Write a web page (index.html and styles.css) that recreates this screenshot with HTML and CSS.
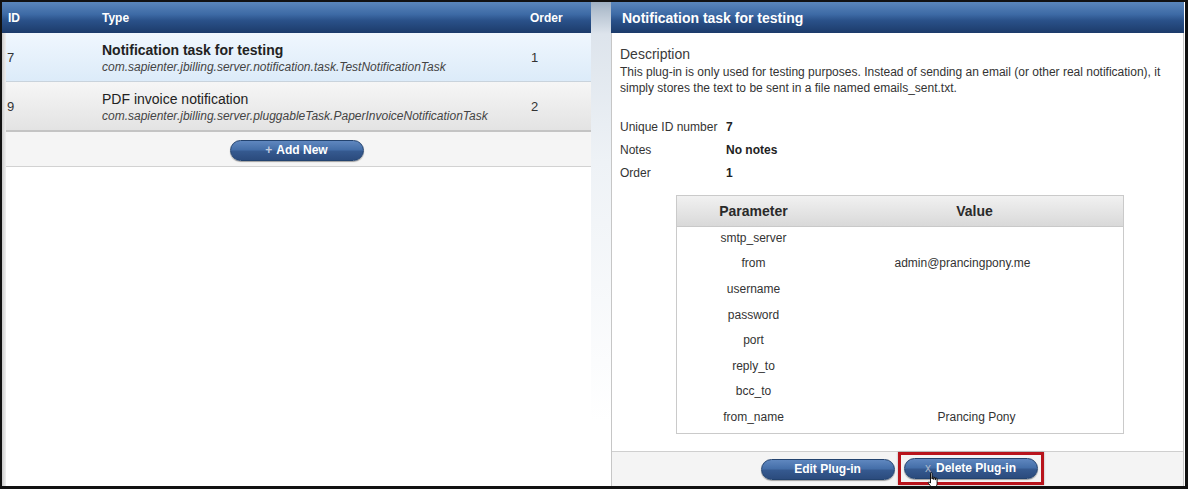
FILE: index.html
```html
<!DOCTYPE html>
<html>
<head>
<meta charset="utf-8">
<link rel="stylesheet" href="styles.css">
</head>
<body>
<div class="frame">
  <div class="left">
    <div class="hdr left-hdr">
      <div class="c-id">ID</div>
      <div class="c-type">Type</div>
      <div class="c-order">Order</div>
    </div>
    <div class="left-body">
      <div class="shade"></div>
      <div class="list">
        <div class="row sel">
          <div class="c-id num">7</div>
          <div class="c-type">
            <div class="title bold">Notification task for testing</div>
            <div class="sub">com.sapienter.jbilling.server.notification.task.TestNotificationTask</div>
          </div>
          <div class="c-order num">1</div>
        </div>
        <div class="row alt">
          <div class="c-id num">9</div>
          <div class="c-type">
            <div class="title">PDF invoice notification</div>
            <div class="sub">com.sapienter.jbilling.server.pluggableTask.PaperInvoiceNotificationTask</div>
          </div>
          <div class="c-order num">2</div>
        </div>
        <div class="list-foot">
          <span class="btn"><span class="ico">+</span>Add New</span>
        </div>
      </div>
    </div>
  </div>
  <div class="gap"></div>
  <div class="right">
    <div class="hdr right-hdr">Notification task for testing</div>
    <div class="content">
      <div class="desc-title">Description</div>
      <p class="desc">This plug-in is only used for testing purposes. Instead of sending an email (or other real notification), it simply stores the text to be sent in a file named emails_sent.txt.</p>
      <div class="info">
        <div class="info-row"><span class="lbl">Unique ID number</span><span class="val">7</span></div>
        <div class="info-row"><span class="lbl">Notes</span><span class="val">No notes</span></div>
        <div class="info-row"><span class="lbl">Order</span><span class="val">1</span></div>
      </div>
      <div class="params">
        <div class="p-head"><span class="p-name">Parameter</span><span class="p-val">Value</span></div>
        <div class="p-row"><span class="p-name">smtp_server</span><span class="p-val"></span></div>
        <div class="p-row"><span class="p-name">from</span><span class="p-val email">admin@prancingpony.me</span></div>
        <div class="p-row"><span class="p-name">username</span><span class="p-val"></span></div>
        <div class="p-row"><span class="p-name">password</span><span class="p-val"></span></div>
        <div class="p-row"><span class="p-name">port</span><span class="p-val"></span></div>
        <div class="p-row"><span class="p-name">reply_to</span><span class="p-val"></span></div>
        <div class="p-row"><span class="p-name">bcc_to</span><span class="p-val"></span></div>
        <div class="p-row"><span class="p-name">from_name</span><span class="p-val">Prancing Pony</span></div>
      </div>
    </div>
    <div class="right-foot">
      <span class="btn">Edit Plug-in</span>
      <span class="hl">
        <span class="btn"><span class="ico x">x</span>Delete Plug-in</span>
        <svg class="cursor" width="12" height="17" viewBox="0 0 12 17">
          <path d="M3.5 1.2c0-.8 1.5-.8 1.5 0V7h.3V5.4c0-.8 1.4-.8 1.4 0V7.4h.3V6c0-.8 1.4-.8 1.4 0v1.8h.3V6.8c0-.8 1.4-.8 1.4 0v4.6c0 2-1 3.2-1.4 4.1H4.6C4 14.4 2.8 13 1.4 11.2c-.6-.8.4-1.7 1.2-1l.9.9z" fill="#fff" stroke="#000" stroke-width=".9"/>
        </svg>
      </span>
    </div>
  </div>
</div>
</body>
</html>
```

FILE: styles.css
```css
* { box-sizing: border-box; }
html, body { margin: 0; padding: 0; background: #000; }
body { font-family: "Liberation Sans", Arial, sans-serif; color: #333; }

.frame {
  width: 1188px;
  height: 489px;
  border-style: solid;
  border-color: #111;
  border-width: 2px 3px 3px 2px;
  background: #fff;
  display: flex;
  overflow: hidden;
}

.hdr {
  height: 31px;
  background: linear-gradient(to bottom, #5a86bb 0%, #3d6aa5 40%, #2a5189 60%, #1c3b6a 100%);
  color: #fff;
  font-weight: bold;
  display: flex;
  align-items: center;
}

/* left panel */
.left { width: 589px; display: flex; flex-direction: column; }
.left-hdr { font-size: 12px; }
.c-id { width: 100px; padding-left: 6px; flex: none; }
.c-type { width: 428px; flex: none; }
.c-order { flex: 1; padding-left: 0; }

.left-body { flex: 1; display: flex; }
.shade {
  width: 4px;
  flex: none;
  background: linear-gradient(to right, #c9c9c9, #e2e2e2 60%, #efefef);
}
.list { flex: 1; display: flex; flex-direction: column; }
.list .c-id { width: 96px; padding-left: 1px; }
.list .c-order { padding-left: 1px; }
.row {
  display: flex;
  align-items: center;
}
.row.sel {
  height: 49px;
  background: linear-gradient(to bottom, #f0f7fe, #dcebf9);
  border-bottom: 1px solid #c9d3dc;
}
.row.alt {
  height: 50px;
  background: linear-gradient(to bottom, #f6f6f6, #e3e3e3);
  border-bottom: 2px solid #c4c4c4;
}
.num { font-size: 13px; color: #333; padding-top: 1px; }
.row .c-type { padding-top: 2px; }
.title { font-size: 14px; color: #222; line-height: 16px; margin-bottom: 2px; }
.title.bold { font-weight: bold; }
.sub { font-size: 12px; font-style: italic; color: #444; line-height: 15px; }

.list-foot {
  height: 35px;
  background: #f5f5f5;
  border-bottom: 1px solid #d2d2d2;
  display: flex;
  align-items: center;
  justify-content: center;
  padding-right: 4px;
  padding-top: 2px;
}

.btn {
  width: 134px;
  height: 21px;
  border-radius: 11px;
  border: 1px solid #23436f;
  background: linear-gradient(to bottom, #5f87bf 0%, #456fa9 45%, #35598f 55%, #2b4b7d 100%);
  box-shadow: 0 1px 1px rgba(0,0,0,.35);
  color: #fff;
  font-size: 12px;
  font-weight: bold;
  display: inline-flex;
  align-items: center;
  justify-content: center;
  line-height: 1;
}
.ico { color: #c4cfe0; margin-right: 4px; font-weight: bold; }
.ico.x { color: #a9b6c8; font-weight: normal; margin-right: 5px; }

.gap {
  width: 20px;
  flex: none;
  background: linear-gradient(to bottom, #9fb0c3 0px, #b6c3d1 10px, #dde4ec 32px, #eef2f6 160px, #ffffff 420px);
}

/* right panel */
.right {
  flex: 1;
  display: flex;
  flex-direction: column;
  border-left: 1px solid #c6c6c6;
  border-right: 1px solid #c6c6c6;
  margin-right: 1px;
}
.right-hdr { font-size: 14px; padding-left: 11px; margin-left: -1px; margin-right: -1px; }
.content { flex: 1; padding: 13px 0 0 8px; }
.desc-title { font-size: 14px; line-height: 16px; color: #3a3a3a; }
.desc { margin: 3px 0 0; font-size: 12px; line-height: 15.5px; color: #333; padding-right: 20px; }
.info { margin-top: 19px; }
.info-row { height: 23px; display: flex; align-items: center; font-size: 12px; }
.lbl { width: 106px; color: #333; }
.val { font-weight: bold; color: #222; }

.params {
  margin: 11px 0 0 56px;
  width: 448px;
  border: 1px solid #cacaca;
  padding-bottom: 1px;
}
.p-head {
  height: 31px;
  display: flex;
  align-items: center;
  background: linear-gradient(to bottom, #f1f1f1, #d9d9d9);
  border-bottom: 1px solid #c9c9c9;
  font-size: 14px;
  font-weight: bold;
  color: #2a2a2a;
}
.p-row {
  height: 25.6px;
  display: flex;
  align-items: center;
  font-size: 12px;
  color: #333;
  padding-bottom: 4px;
}
.p-name { width: 153px; text-align: center; }
.p-val { flex: 1; text-align: center; padding-left: 0; }
.p-head .p-val { padding-right: 4px; }
.p-val.email { padding-right: 28px; }

.right-foot {
  height: 35px;
  background: #f4f4f4;
  border-top: 1px solid #cfcfcf;
  display: flex;
  align-items: center;
  justify-content: center;
  gap: 3px;
  padding-left: 9px;
}
.hl {
  position: relative;
  display: inline-flex;
  border: 3px solid #b8141c;
  padding: 3px;
  margin-top: -2px;
  box-shadow: 0 0 2px rgba(0,0,0,.3);
}
.cursor { position: absolute; left: 26px; top: 17px; }
```
